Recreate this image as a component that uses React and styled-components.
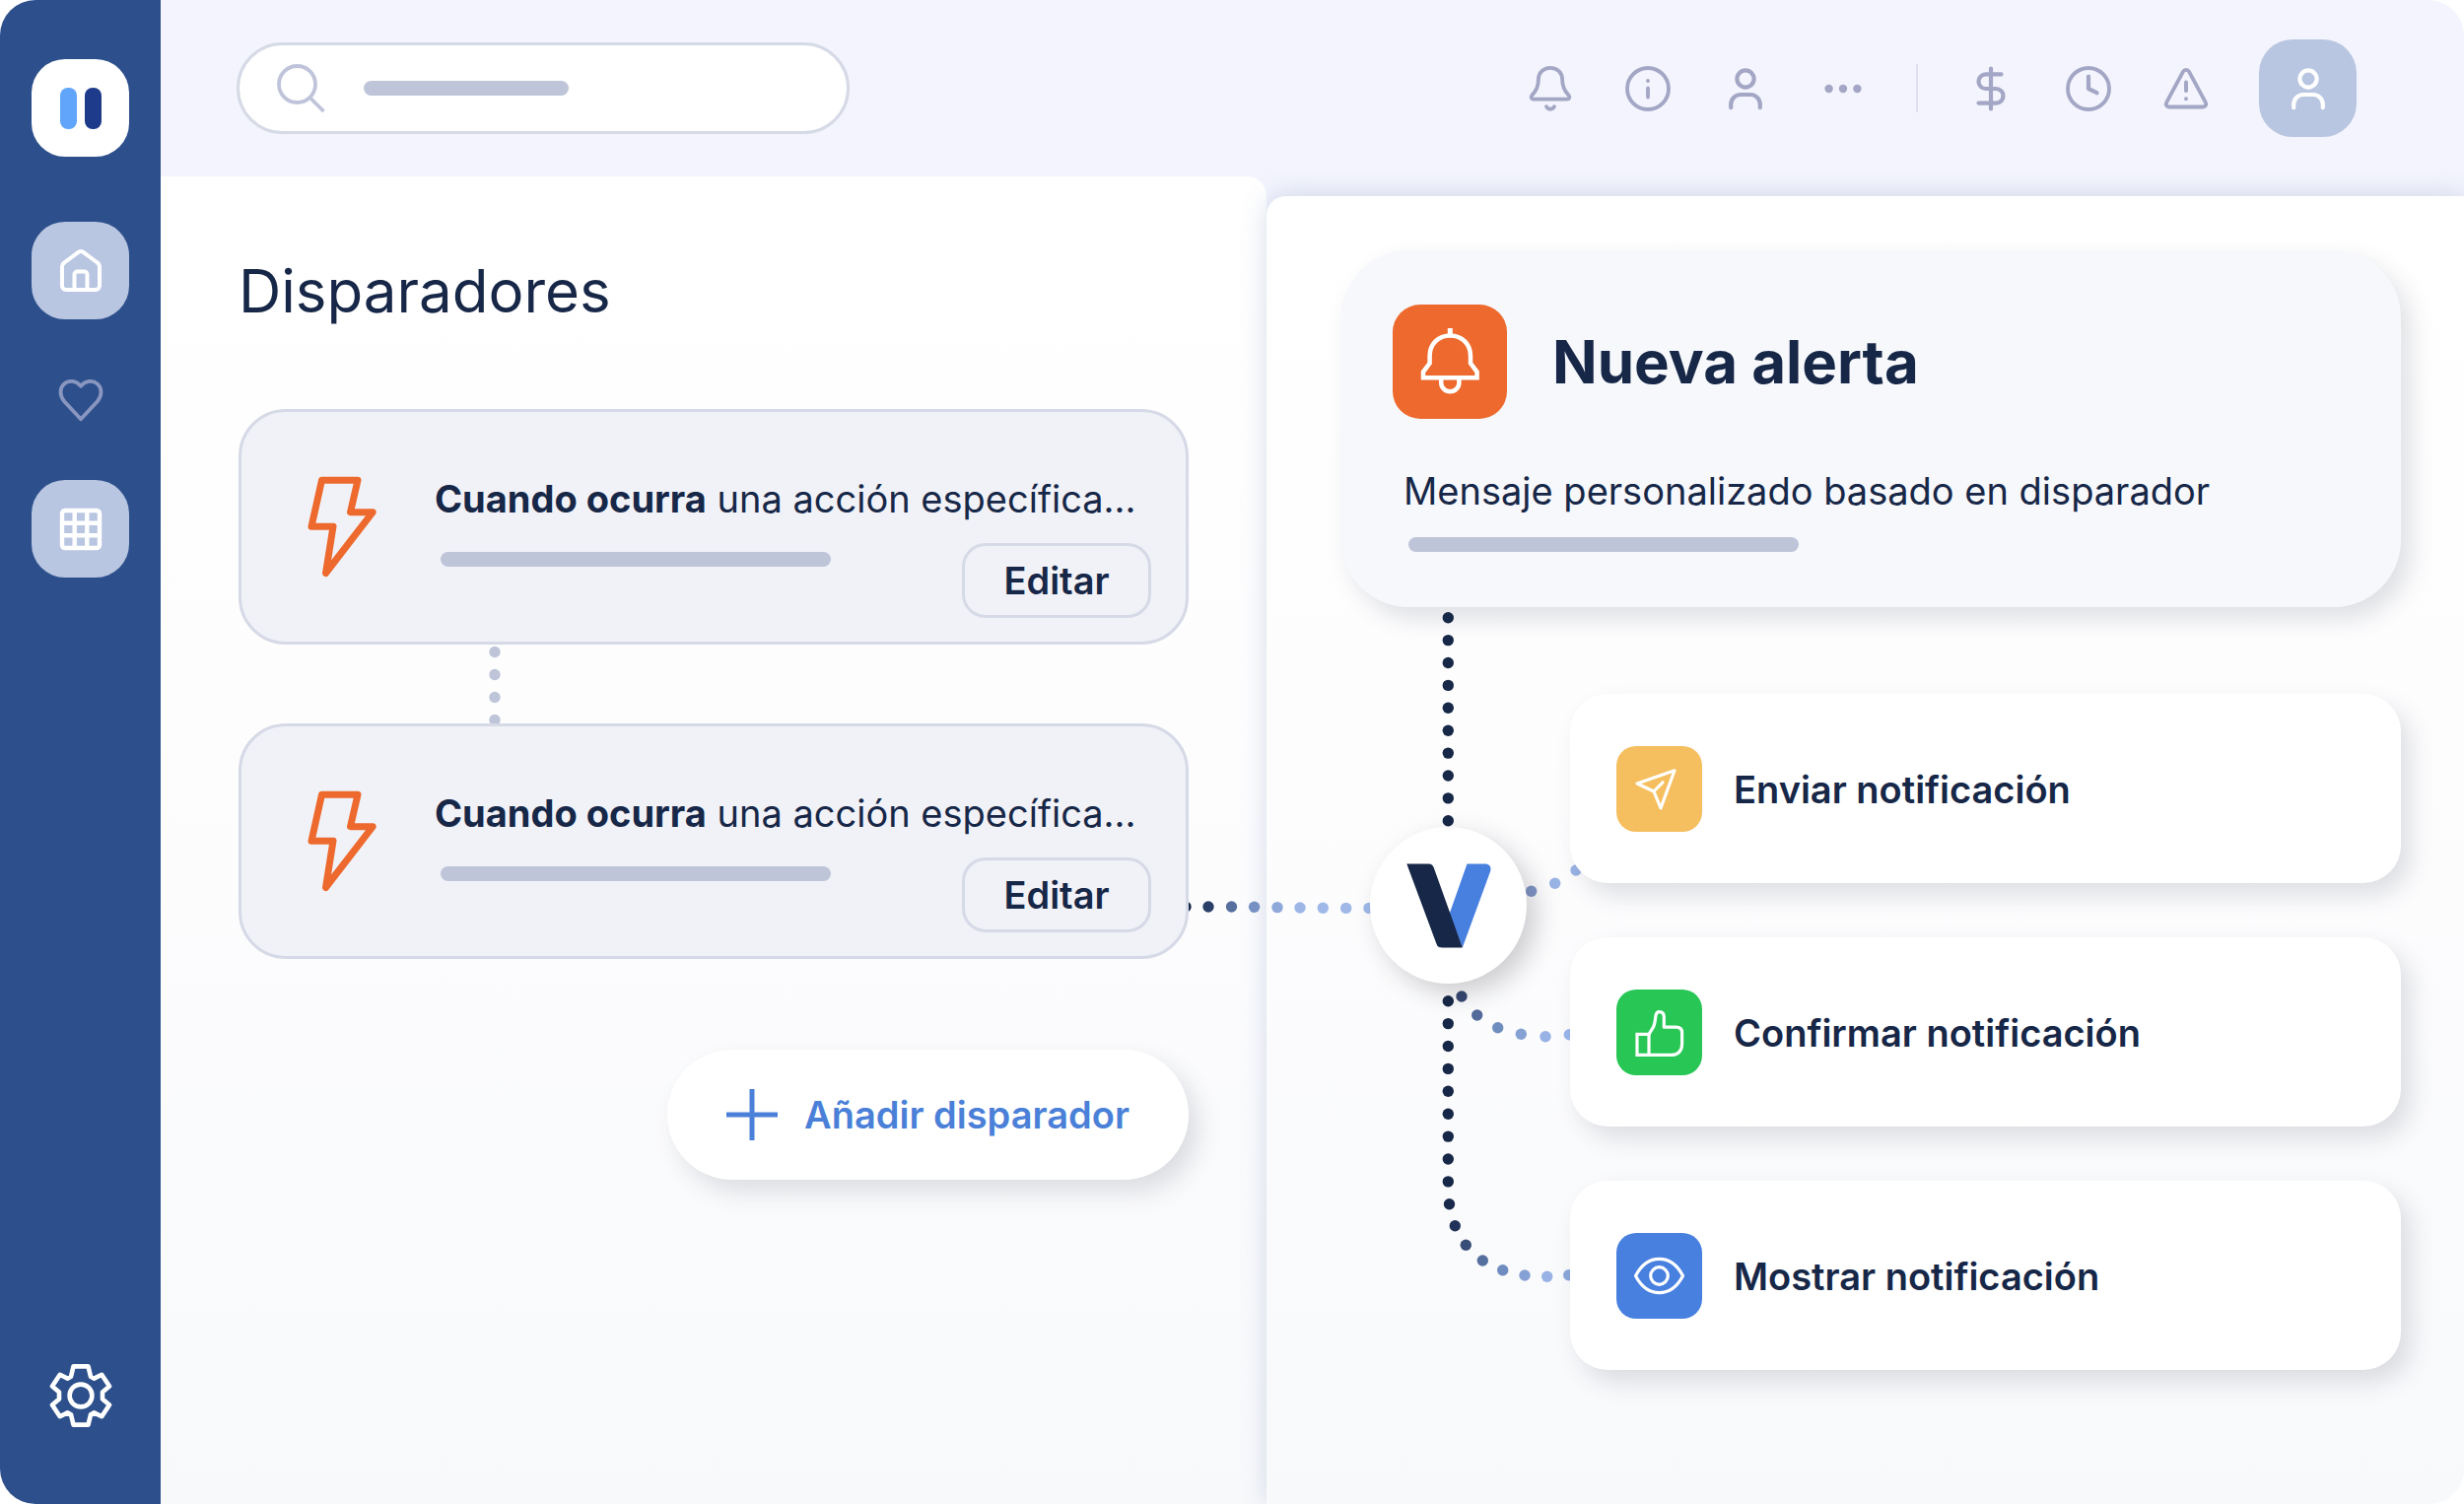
import React from "react"

import styled, { createGlobalStyle } from "styled-components"

const colors = {
  navy: `#172747`,
  sidebar: `#2d508c`,
  header: `#f3f4fd`,
  tile: `#b9c6e1`,
  muted: `#a3a6c4`,
  bar: `#bfc5d9`,
  border: `#d6d9e6`,
  orange: `#ed692d`,
  blue: `#4880e0`,
  link: `#4a80d8`,
}

const cardShadow = `10px 12px 24px rgba(45, 55, 75, 0.15)`

const GlobalStyle = createGlobalStyle`
  * {
    box-sizing: border-box;
  }

  body {
    margin: 0;
    background: #ffffff;
    color: ${colors.navy};
    font-family: Inter, "Liberation Sans", sans-serif;
  }

  button, input {
    font: inherit;
    color: inherit;
  }

  h1, h2, p {
    margin: 0;
  }

  svg {
    display: block;
    flex: none;
  }
`

const Shell = styled.div`
  display: flex;
  min-height: 100vh;
  border-radius: 36px;
  overflow: hidden;
  background: ${colors.header};
`

/* ---------- sidebar ---------- */

const Sidebar = styled.nav`
  display: flex;
  flex: none;
  flex-direction: column;
  align-items: center;
  width: 163px;
  padding: 60px 0 78px;
  background: ${colors.sidebar};
`

const Logo = styled.a`
  display: flex;
  align-items: center;
  justify-content: center;
  gap: 8px;
  width: 99px;
  height: 99px;
  margin-bottom: 66px;
  border-radius: 34px;
  background: #ffffff;
`

const LogoBar = styled.span`
  width: 17px;
  height: 42px;
  border-radius: 8px;
  background: ${({ $color }) => $color};
`

const NavList = styled.div`
  display: flex;
  flex: 1;
  flex-direction: column;
  gap: 32px;
`

const TileButton = styled.button`
  display: flex;
  align-items: center;
  justify-content: center;
  width: 99px;
  height: 99px;
  padding: 0;
  border: 0;
  border-radius: 34px;
  background: ${({ $plain }) => ($plain ? `transparent` : colors.tile)};
  color: ${({ $plain }) => ($plain ? `#8996c0` : `#ffffff`)};
`

const BareButton = styled.button`
  display: flex;
  padding: 0;
  border: 0;
  background: none;
  color: ${({ $color }) => $color};
`

/* ---------- header ---------- */

const Main = styled.div`
  display: flex;
  flex: 1;
  flex-direction: column;
  min-width: 0;
`

const Header = styled.header`
  display: flex;
  align-items: center;
  justify-content: space-between;
  height: 179px;
  padding: 0 109px 0 77px;
`

const SearchBox = styled.label`
  display: flex;
  align-items: center;
  width: 622px;
  height: 93px;
  padding: 0 38px;
  border: 3px solid ${colors.border};
  border-radius: 47px;
  background: #ffffff;
`

const SearchInput = styled.input`
  flex: 1;
  min-width: 0;
  border: 0;
  outline: 0;
  background: none;
  font-size: 38px;
`

const Bar = styled.span`
  display: block;
  flex: none;
  width: ${({ $width }) => $width || 396}px;
  height: 15px;
  border-radius: 8px;
  background: ${colors.bar};
`

const SearchBar = styled(Bar)`
  margin-left: 38px;
`

const Tools = styled.div`
  display: flex;
  align-items: center;
  gap: 49px;
`

const Divider = styled.span`
  width: 2px;
  height: 49px;
  background: #dfe1f0;
`

/* ---------- panels ---------- */

const Panels = styled.div`
  display: grid;
  flex: 1;
  grid-template-columns: 1122fr 1215fr;
`

const Triggers = styled.section`
  padding: 80px 79px;
  border-radius: 0 20px 0 0;
  background: linear-gradient(#ffffff, #fdfdfe 45%, #f8f9fb);
`

const Flow = styled.section`
  position: relative;
  margin-top: 20px;
  padding: 55px 64px 55px 76px;
  border-radius: 20px 0 0 0;
  background: linear-gradient(#ffffff, #fdfdfe 45%, #f8f9fb);
  box-shadow: 0 0 26px rgba(95, 120, 170, 0.26);
`

const Title = styled.h1`
  margin-bottom: 84px;
  font-size: 60px;
  font-weight: 400;
  line-height: 72px;
`

const TriggerCard = styled.article`
  position: relative;
  z-index: 1;
  display: flex;
  gap: 59px;
  padding: 64px 35px 24px 67px;
  border: 3px solid ${colors.border};
  border-radius: 48px;
  background: #f1f2f8;
`

const TriggerBody = styled.div`
  flex: 1;
  min-width: 0;
`

const Text = styled.p`
  font-size: 38px;
  font-weight: 400;
  line-height: 48px;
  white-space: nowrap;

  strong {
    font-weight: 700;
  }
`

const TriggerFooter = styled.div`
  display: flex;
  align-items: flex-start;
  justify-content: space-between;
  margin-top: 21px;
  padding-left: 6px;

  ${Bar} {
    margin-top: 9px;
  }
`

const EditButton = styled.button`
  width: 192px;
  height: 76px;
  padding: 0;
  border: 3px solid ${colors.border};
  border-radius: 24px;
  background: none;
  font-size: 38px;
  font-weight: 600;
  line-height: 48px;
`

const Link = styled.div`
  display: flex;
  height: 80px;
  padding-left: 254px;
`

const AddButton = styled.button`
  display: flex;
  align-items: center;
  gap: 27px;
  height: 132px;
  margin: 92px 0 0 auto;
  padding: 0 60px;
  border: 0;
  border-radius: 66px;
  background: #ffffff;
  box-shadow: ${cardShadow};
  color: ${colors.link};
  font-size: 38px;
  font-weight: 600;
  line-height: 48px;
`

const AlertCard = styled.article`
  padding: 55px 52px 56px;
  border-radius: 68px;
  background: #f6f8fc;
  box-shadow: ${cardShadow};
`

const AlertHead = styled.div`
  display: flex;
  align-items: center;
  gap: 46px;
`

const AlertTitle = styled.h2`
  font-size: 60px;
  font-weight: 700;
  line-height: 72px;
`

const AlertMessage = styled.div`
  margin: 49px 0 0 11px;

  ${Bar} {
    margin: 23px 0 0 5px;
  }
`

const IconTile = styled.span`
  display: flex;
  flex: none;
  width: ${({ $size }) => $size}px;
  height: ${({ $size }) => $size}px;
  border-radius: ${({ $size }) => ($size > 100 ? 28 : 20)}px;
  background: ${({ $color }) => $color};
  color: #ffffff;
`

const Actions = styled.div`
  display: flex;
  flex-direction: column;
  gap: 55px;
  margin: 88px 0 0 232px;
`

const ActionCard = styled.article`
  position: relative;
  z-index: 1;
  display: flex;
  align-items: center;
  gap: 32px;
  padding: 53px 47px 52px;
  border-radius: 38px;
  background: #ffffff;
  box-shadow: ${cardShadow};
  font-size: 38px;
  font-weight: 600;
  line-height: 48px;
`

/* diagram layer: dotted connectors and the hub they meet in */

const Connectors = styled.svg`
  position: absolute;
  top: 0;
  left: -85px;
  overflow: visible;
`

const Hub = styled.div`
  position: absolute;
  z-index: 1;
  top: 640px;
  left: 105px;
  display: flex;
  align-items: center;
  justify-content: center;
  width: 159px;
  height: 159px;
  border-radius: 50%;
  background: #ffffff;
  box-shadow: 10px 10px 26px rgba(40, 40, 50, 0.22);
`

/* ---------- icons ---------- */

const Icon = ({ size = 50, stroke = 3.8, children }) => (
  <svg
    width={size}
    height={size}
    viewBox={`0 0 ${size} ${size}`}
    fill="none"
    stroke="currentColor"
    strokeWidth={stroke}
    strokeLinecap="round"
    strokeLinejoin="round"
    aria-hidden="true"
  >
    {children}
  </svg>
)

const HomeIcon = () => (
  <Icon stroke={4}>
    <path d="M6 20.5C6 18.8 6.8 17.5 8.2 16.5L22.5 5.8C24 4.8 26 4.8 27.5 5.8L41.8 16.5C43.2 17.5 44 18.8 44 20.5V40A4 4 0 0 1 40 44H10A4 4 0 0 1 6 40Z" />
    <path d="M18.5 44V28.5A3 3 0 0 1 21.5 25.5H28.5A3 3 0 0 1 31.5 28.5V44" />
  </Icon>
)

const HeartIcon = () => (
  <Icon>
    <path d="M25 44.3L8.2 26.2C3.2 20.4 3.4 12.8 8 8.6C13 4.2 20.5 5.2 25 10.8C29.5 5.2 37 4.2 42 8.6C46.6 12.8 46.8 20.4 41.8 26.2Z" />
  </Icon>
)

const GridIcon = () => (
  <Icon stroke={4.4}>
    <rect x="6" y="6" width="38" height="38" rx="3" />
    <path d="M18.7 6V44M31.3 6V44M6 18.7H44M6 31.3H44" />
  </Icon>
)

const GearIcon = () => (
  <Icon size={64} stroke={4.6}>
    <path d="M24.5 2.4H39.5L42 12.8L45.5 14.6L53.2 10.8L61 22.6L54 28.5V35.5L61 41.4L53.2 53.2L45.5 49.4L42 51.2L39.5 61.6H24.5L22 51.2L18.5 49.4L10.8 53.2L3 41.4L10 35.5V28.5L3 22.6L10.8 10.8L18.5 14.6L22 12.8Z" />
    <circle cx="32" cy="32" r="11.4" />
  </Icon>
)

const SearchIcon = () => (
  <Icon>
    <circle cx="20.5" cy="20.5" r="18.5" />
    <path d="M33.5 34L47.5 48" strokeLinecap="butt" />
  </Icon>
)

const BellIcon = () => (
  <Icon>
    <path d="M25 3.8C18 3.8 12.9 8.8 12.9 15.5C12.9 24.5 9.5 28.5 6.4 31.6C4.9 33.4 5.8 35.7 8 35.7H42C44.2 35.7 45.1 33.4 43.6 31.6C40.5 28.5 37.1 24.5 37.1 15.5C37.1 8.8 32 3.8 25 3.8Z" />
    <path d="M21 43.2C22.8 46.6 27.2 46.6 29 43.2" />
  </Icon>
)

const InfoIcon = () => (
  <Icon>
    <circle cx="25" cy="25" r="21" />
    <path d="M25 24.5V33.5M25 17V17.1" />
  </Icon>
)

const UserIcon = () => (
  <Icon stroke={4.2}>
    <circle cx="25" cy="15" r="8.6" />
    <path d="M10.2 44.2V41C10.2 35.5 14.5 31 20 31H30C35.5 31 39.8 35.5 39.8 41V44.2" />
  </Icon>
)

const MoreIcon = () => (
  <Icon>
    <g fill="currentColor" stroke="none">
      <circle cx="10.6" cy="25" r="4.2" />
      <circle cx="25" cy="25" r="4.2" />
      <circle cx="39.4" cy="25" r="4.2" />
    </g>
  </Icon>
)

const DollarIcon = () => (
  <Icon stroke={4.2}>
    <path d="M25 4.5V45.5M35.5 10.4H19.8A7.3 7.3 0 0 0 19.8 25H30.2A7.3 7.3 0 0 1 30.2 39.6H12.5" />
  </Icon>
)

const ClockIcon = () => (
  <Icon>
    <circle cx="25" cy="25" r="21" />
    <path d="M25 12.5V25L33.5 29.2" strokeWidth="4.2" />
  </Icon>
)

const WarningIcon = () => (
  <Icon>
    <path d="M22 7.6L5.2 38.9C3.9 41.3 5.4 43.5 8 43.5H42C44.6 43.5 46.1 41.3 44.8 38.9L28 7.6C26.7 5.4 23.3 5.4 22 7.6Z" />
    <path d="M25 18.5V27M25 35.2V35.3" strokeWidth="4" />
  </Icon>
)

const BoltIcon = () => (
  <svg width="70" height="104" viewBox="0 1 70 104" fill="none" aria-hidden="true">
    <path
      d="M14.5 6.3H51L43.5 38.7H66.2L18.5 100.5L26 53.3H4L14.5 6.3Z"
      stroke={colors.orange}
      strokeWidth="7"
      strokeLinejoin="round"
    />
  </svg>
)

const PlusIcon = () => (
  <Icon size={52} stroke={5}>
    <path d="M26 0V52M0 26H52" strokeLinecap="butt" />
  </Icon>
)

const BigBellIcon = () => (
  <Icon size={116} stroke={4.5}>
    <g strokeLinecap="butt" strokeLinejoin="miter">
      <path d="M58.3 24V32" strokeWidth="5" />
      <path d="M58.3 31.4C46 31.4 37.6 40.5 37.6 52V59.5L31 68.3V74.2H85.6V68.3L79 59.5V52C79 40.5 70.6 31.4 58.3 31.4Z" />
      <path d="M49.2 74.2V79.2A9.1 9.1 0 0 0 67.4 79.2V74.2" />
    </g>
  </Icon>
)

const SendIcon = () => (
  <Icon size={87} stroke={3.2}>
    <path d="M21 38L59 24.8L45 63L38 46Z" />
    <path d="M38 46L47 36.8" />
  </Icon>
)

const ThumbIcon = () => (
  <Icon size={87} stroke={3.2}>
    <path d="M21 45.4H33V66.4H21Z" strokeLinejoin="miter" />
    <path d="M33 45.4L37.6 37.8C39.2 34.5 39.5 30 39.9 26.8C40.2 24 41.2 22.6 43.6 22.6C46.8 22.6 48.3 25 48.3 28V38.2H60.3C64.5 38.2 66.6 40.2 66.6 43.8V55.2C66.6 62.4 62.2 66.4 55.6 66.4H33" />
  </Icon>
)

const EyeIcon = () => (
  <Icon size={87} stroke={3.2}>
    <path d="M19.5 43.5C25 33 33.5 26.4 43.5 26.4S62 33 67.5 43.5C62 54 53.5 60.6 43.5 60.6S25 54 19.5 43.5Z" />
    <circle cx="43.5" cy="43.5" r="8.8" />
  </Icon>
)

const HubLogo = () => (
  <svg width="86" height="86" viewBox="0 0 86 86" aria-hidden="true">
    <path
      d="M61.5 0.5H79.5C84.5 0.5 86.5 4 85 8.5L56.8 85.5L43.5 51.5Z"
      fill={colors.blue}
    />
    <path
      d="M0.3 0.5H22.5C25.4 0.5 26.8 1.8 27.8 4.5L56.8 85.5H36C32.8 85.5 31.5 84.6 30.4 81.6Z"
      fill={colors.navy}
    />
  </svg>
)

// [x, y, color]
const dots = [
  // last trigger -> hub
  [3, 721, `#172747`],
  [26, 721, `#2a3f67`],
  [49.5, 721, `#566f9f`],
  [72.6, 721.3, `#7690c4`],
  [96, 721.6, `#8ea8da`],
  [119, 722, `#9db6e6`],
  [142.3, 722.2, `#9fb8e8`],
  [165.7, 722.4, `#9fb8e8`],
  [189, 722.4, `#9fb8e8`],
  // hub -> enviar
  [353.7, 705.3, `#8096c7`],
  [377.7, 697.3, `#9ab3e5`],
  [399, 684, `#9ab3e5`],
  // hub -> confirmar
  [283, 812, `#34476f`],
  [298.7, 831, `#536a9a`],
  [319.7, 843.7, `#6f8dbe`],
  [343.3, 850.3, `#86a1d3`],
  [368, 852.7, `#98b2e6`],
  [392.3, 850.7, `#9ab5ea`],
  // hub -> mostrar
  [270.5, 1022.7, `#18294b`],
  [276.3, 1044.7, `#20325a`],
  [287.3, 1064.3, `#384e78`],
  [304.3, 1080, `#556f9f`],
  [324.7, 1089.7, `#6f8cc0`],
  [347, 1095, `#85a0d4`],
  [369.7, 1096.3, `#98b2e6`],
  [391.7, 1094.7, `#8ba6da`],
]

const column = (y, count) =>
  Array.from({ length: count }, (_, i) => [269.3, y + i * 22.9, colors.navy])

const allDots = [...column(427.7, 10), ...column(816.7, 9), ...dots]

const actions = [
  { label: `Enviar notificación`, color: `#f5be5e`, Glyph: SendIcon },
  { label: `Confirmar notificación`, color: `#27c655`, Glyph: ThumbIcon },
  { label: `Mostrar notificación`, color: colors.blue, Glyph: EyeIcon },
]

const tools = [
  [`Alertas`, BellIcon],
  [`Información`, InfoIcon],
  [`Usuario`, UserIcon],
  [`Más`, MoreIcon],
  null,
  [`Pagos`, DollarIcon],
  [`Historial`, ClockIcon],
  [`Avisos`, WarningIcon],
]

const Trigger = () => (
  <TriggerCard>
    <BoltIcon />
    <TriggerBody>
      <Text>
        <strong>Cuando ocurra</strong> una acción específica...
      </Text>
      <TriggerFooter>
        <Bar />
        <EditButton type="button">Editar</EditButton>
      </TriggerFooter>
    </TriggerBody>
  </TriggerCard>
)

export default () => {
  return (
    <>
      <GlobalStyle />
      <Shell>
        <Sidebar>
          <Logo href="#" aria-label="Inicio">
            <LogoBar $color="#60a5fa" />
            <LogoBar $color="#1e3a8a" />
          </Logo>
          <NavList>
            <TileButton type="button" aria-label="Panel">
              <HomeIcon />
            </TileButton>
            <TileButton type="button" aria-label="Favoritos" $plain>
              <HeartIcon />
            </TileButton>
            <TileButton type="button" aria-label="Aplicaciones">
              <GridIcon />
            </TileButton>
          </NavList>
          <BareButton type="button" aria-label="Ajustes" $color="#ffffff">
            <GearIcon />
          </BareButton>
        </Sidebar>

        <Main>
          <Header>
            <SearchBox>
              <BareButton as="span" $color="#c0c4db">
                <SearchIcon />
              </BareButton>
              <SearchBar $width={208} />
              <SearchInput type="search" aria-label="Buscar" />
            </SearchBox>
            <Tools>
              {tools.map(tool => {
                if (!tool) return <Divider key="divider" />
                const [label, Glyph] = tool
                return (
                  <BareButton
                    key={label}
                    type="button"
                    aria-label={label}
                    $color={colors.muted}
                  >
                    <Glyph />
                  </BareButton>
                )
              })}
              <TileButton type="button" aria-label="Mi cuenta">
                <UserIcon />
              </TileButton>
            </Tools>
          </Header>

          <Panels>
            <Triggers>
              <Title>Disparadores</Title>
              <Trigger />
              <Link>
                <svg width="12" height="80" fill={colors.bar} aria-hidden="true">
                  {[7.5, 30.5, 53.5, 76.5].map(y => (
                    <circle key={y} cx="6" cy={y} r="5.7" />
                  ))}
                </svg>
              </Link>
              <Trigger />
              <AddButton type="button">
                <PlusIcon />
                Añadir disparador
              </AddButton>
            </Triggers>

            <Flow>
              <AlertCard>
                <AlertHead>
                  <IconTile $size={116} $color={colors.orange}>
                    <BigBellIcon />
                  </IconTile>
                  <AlertTitle>Nueva alerta</AlertTitle>
                </AlertHead>
                <AlertMessage>
                  <Text>Mensaje personalizado basado en disparador</Text>
                  <Bar />
                </AlertMessage>
              </AlertCard>

              <Connectors width="400" height="1120" aria-hidden="true">
                {allDots.map(([x, y, fill]) => (
                  <circle key={`${x}-${y}`} cx={x} cy={y} r="5.7" fill={fill} />
                ))}
              </Connectors>
              <Hub>
                <HubLogo />
              </Hub>

              <Actions>
                {actions.map(({ label, color, Glyph }) => (
                  <ActionCard key={label}>
                    <IconTile $size={87} $color={color}>
                      <Glyph />
                    </IconTile>
                    {label}
                  </ActionCard>
                ))}
              </Actions>
            </Flow>
          </Panels>
        </Main>
      </Shell>
    </>
  )
}
